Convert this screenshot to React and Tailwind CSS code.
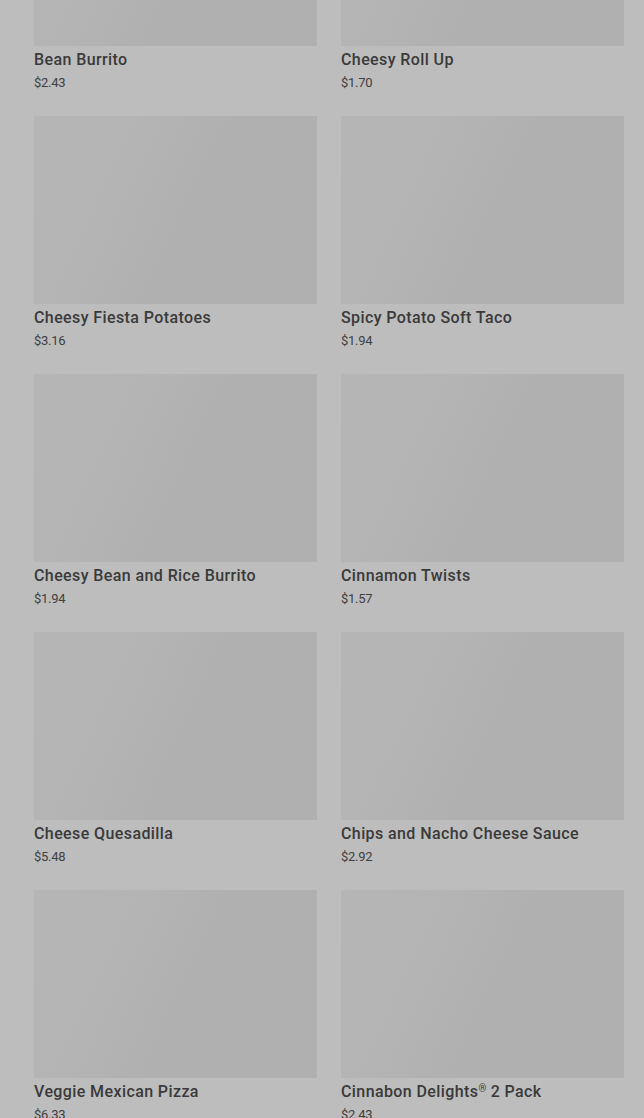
const items = [
  ["Bean Burrito", "$2.43"],
  ["Cheesy Roll Up", "$1.70"],
  ["Cheesy Fiesta Potatoes", "$3.16"],
  ["Spicy Potato Soft Taco", "$1.94"],
  ["Cheesy Bean and Rice Burrito", "$1.94"],
  ["Cinnamon Twists", "$1.57"],
  ["Cheese Quesadilla", "$5.48"],
  ["Chips and Nacho Cheese Sauce", "$2.92"],
  ["Veggie Mexican Pizza", "$6.33"],
  ["Cinnabon Delights® 2 Pack", "$2.43"],
];

function Name({ text }) {
  const parts = text.split("®");
  if (parts.length === 1) return text;
  return (
    <>
      {parts[0]}
      <span className="text-[10px] leading-none align-[5px] tracking-normal">®</span>
      {parts[1]}
    </>
  );
}

export default function App() {
  return (
    <div
      className="h-[1118px] overflow-hidden bg-[#bdbdbd] text-[#3a3a3a]"
      style={{ fontFamily: "Roboto, 'Noto Sans', sans-serif" }}
    >
      <div className="mt-[-142px] pl-[34px] pr-[20px] grid grid-cols-2 gap-x-[24px] gap-y-[23px]">
        {items.map(([name, price]) => (
          <div key={name} className="flex flex-col">
            <div className="h-[188px] bg-[linear-gradient(115deg,#b5b5b5_0%,#b4b4b4_30%,#b0b0b0_55%,#b0b0b0_100%)]" />
            <div className="mt-[2px] text-[16px] leading-[24px] font-medium tracking-[0.4px]">
              <Name text={name} />
            </div>
            <div className="mt-[1px] text-[13px] leading-[20px] tracking-[-0.3px] text-[#404040]">{price}</div>
          </div>
        ))}
      </div>
    </div>
  );
}
